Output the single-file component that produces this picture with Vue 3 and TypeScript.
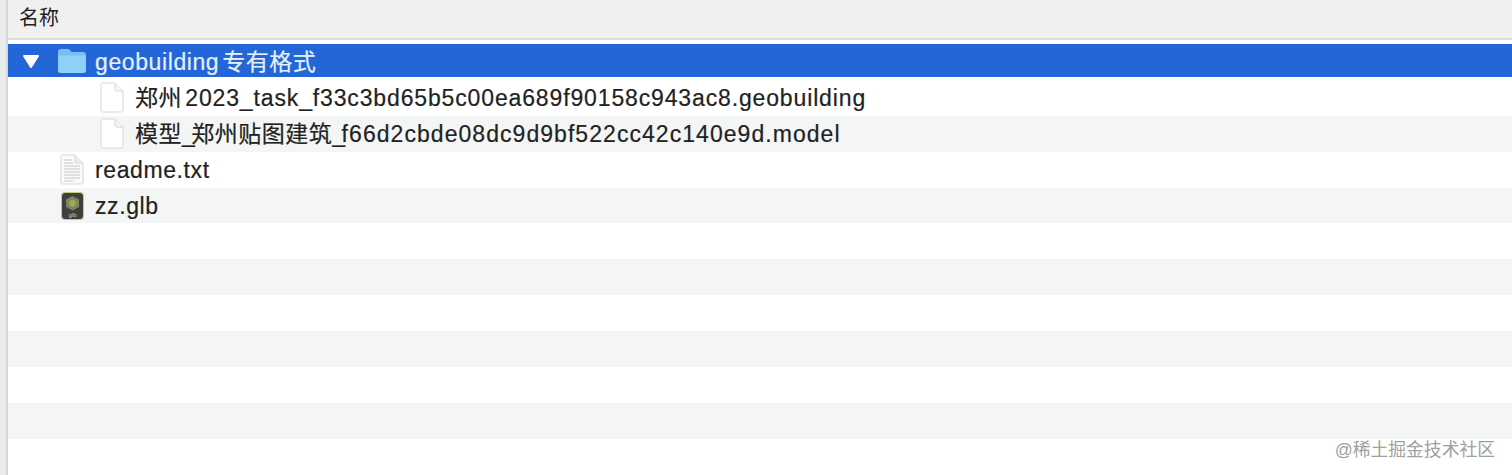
<script setup lang="ts">
interface FileRow {
  name: string
  icon?: 'folder' | 'blank' | 'text' | 'glb'
  depth?: number
  selected?: boolean
  spacing?: number
}

const rows: FileRow[] = [
  { name: 'geobuilding 专有格式', icon: 'folder', selected: true },
  { name: '郑州 2023_task_f33c3bd65b5c00ea689f90158c943ac8.geobuilding', icon: 'blank', depth: 1, spacing: 0.86 },
  { name: '模型_郑州贴图建筑_f66d2cbde08dc9d9bf522cc42c140e9d.model', icon: 'blank', depth: 1, spacing: 1.05 },
  { name: 'readme.txt', icon: 'text' },
  { name: 'zz.glb', icon: 'glb' },
  { name: '' },
  { name: '' },
  { name: '' },
  { name: '' },
  { name: '' },
  { name: '' },
  { name: '' }
]

// 中文和西文的字距不一样，拆开来分别处理
const splitName = (name: string) =>
  (name.match(/[\u4e00-\u9fff]+|(?<=[\u4e00-\u9fff])_|[^\u4e00-\u9fff_][^\u4e00-\u9fff]*/g) ?? []).map((text) => ({
    text,
    kind: /[\u4e00-\u9fff]/.test(text) ? 'cjk' : text === '_' ? 'sep' : 'latin'
  }))
</script>

<template>
  <div class="window">
    <div class="sidebar-edge"></div>
    <div class="list">
      <div class="header">名称</div>
      <div class="rows">
        <div
          v-for="(row, i) in rows"
          :key="i"
          class="row"
          :class="{ alt: i % 2 === 0 && i > 0, selected: row.selected, child: row.depth }"
        >
          <div class="band">
            <svg v-if="row.selected" class="arrow" width="18" height="15" viewBox="0 0 18 15">
              <path d="M2 2h14L9 13z" fill="#fff" stroke="#fff" stroke-width="2" stroke-linejoin="round" />
            </svg>
            <svg v-if="row.icon === 'folder'" class="icon folder" width="30" height="25" viewBox="0 0 30 25">
              <path d="M1 4c0-2 1-3 3-3h6.500c1.500 0 2 .5 3 1.600L14.500 4H26c2 0 3 1 3 3v15c0 2-1 3-3 3H4c-2 0-3-1-3-3z" fill="#76bff0" />
              <path d="M1 7.500h28V22c0 2-1 3-3 3H4c-2 0-3-1-3-3z" fill="#8fd0f7" />
            </svg>
            <svg v-else-if="row.icon === 'blank'" class="icon" width="24" height="31" viewBox="0 0 24 31">
              <path d="M1 2.500c0-.8.600-1.500 1.500-1.500h12.500L23 9v19.500c0 .9-.7 1.500-1.500 1.500h-19C1.600 30 1 29.400 1 28.500z" fill="#fff" stroke="#d6d6d6" />
              <path d="M15 1v6.500c0 .9.600 1.500 1.500 1.500H23" fill="#f6f6f6" stroke="#d6d6d6" />
            </svg>
            <svg v-else-if="row.icon === 'text'" class="icon" width="24" height="31" viewBox="0 0 24 31">
              <path d="M1 2.500c0-.8.600-1.500 1.500-1.500h12.500L23 9v19.500c0 .9-.7 1.500-1.500 1.500h-19C1.600 30 1 29.400 1 28.500z" fill="#fbfbfb" stroke="#d6d6d6" />
              <path d="M15 1v6.500c0 .9.600 1.500 1.500 1.500H23" fill="#eee" stroke="#d6d6d6" />
              <path d="M4 6h8M4 9h9M4 12h16M4 15h16M4 18h16M4 21h16M4 24h16M4 27h9" stroke="#c4c4c4" stroke-width="1" />
            </svg>
            <svg v-else-if="row.icon === 'glb'" class="icon glb" width="23" height="28" viewBox="0 0 23 28">
              <rect x=".5" y=".5" width="22" height="27" rx="3.500" fill="#3d403b" stroke="#c3cc7e" />
              <path d="M11.500 4l6.500 3.500v7.500L11.500 18.500 5 15V7.500z" fill="#7d8366" />
              <path d="M11.500 7.500l3.200 1.800v3.800l-3.200 1.800-3.200-1.800V9.300z" fill="#a4ab3f" />
              <text x="11.500" y="25" class="glb-label">glb</text>
            </svg>
            <span v-if="row.name" class="name">
              <span
                v-for="(part, p) in splitName(row.name)"
                :key="p"
                :class="part.kind"
                :style="part.kind === 'latin' && row.spacing ? { letterSpacing: row.spacing + 'px' } : undefined"
                >{{ part.text }}</span
              >
            </span>
          </div>
        </div>
      </div>
    </div>
    <div class="watermark">@稀土掘金技术社区</div>
  </div>
</template>

<style scoped>
.window {
  position: relative;
  display: flex;
  height: 475px;
  overflow: hidden;
  background: #fff;
  font-family: "Liberation Sans", "Noto Sans CJK SC", sans-serif;
  color: #222;
}

.sidebar-edge {
  width: 6px;
  flex-shrink: 0;
  background: #e9ebeb;
  border-right: 2px solid #d5d7d7;
}

.list {
  flex: 1;
  min-width: 0;
}

.header {
  height: 38px;
  padding-left: 11px;
  line-height: 37px;
  font-size: 20px;
  background: #f0f0f0;
  border-bottom: 2px solid #dcdcdc;
}

.rows {
  padding-top: 4px;
}

.row {
  height: 35.9px;
}

.row.alt {
  background: #f4f5f5;
}

.band {
  display: flex;
  align-items: center;
  height: 100%;
  padding-left: 52px;
  font-size: 23px;
  letter-spacing: 0.6px;
  word-spacing: -4px;
  -webkit-text-stroke: 0.2px currentColor;
}

.row.child .band {
  padding-left: 92px;
}

.row.selected .band {
  position: relative;
  height: 33px;
  background: #2266d8;
  color: #e6f0fb;
}

.arrow {
  position: absolute;
  left: 14px;
  top: 10px;
}

.icon {
  flex-shrink: 0;
  margin-right: 11px;
}

.glb {
  margin-left: 1px;
}

.glb-label {
  font-size: 6px;
  fill: #c8c8c4;
  text-anchor: middle;
  letter-spacing: 0;
  stroke: none;
  -webkit-text-stroke: 0;
}

.folder {
  margin-left: -3px;
  margin-right: 8px;
}

.name {
  white-space: nowrap;
  line-height: 28px;
}

.selected .name {
  position: relative;
  top: 1px;
}

.cjk {
  letter-spacing: 0.5px;
}

.sep {
  letter-spacing: -3.5px;
}

.watermark {
  position: absolute;
  right: 17px;
  bottom: 14px;
  font-size: 17.8px;
  color: #a0a0a0;
}
</style>
